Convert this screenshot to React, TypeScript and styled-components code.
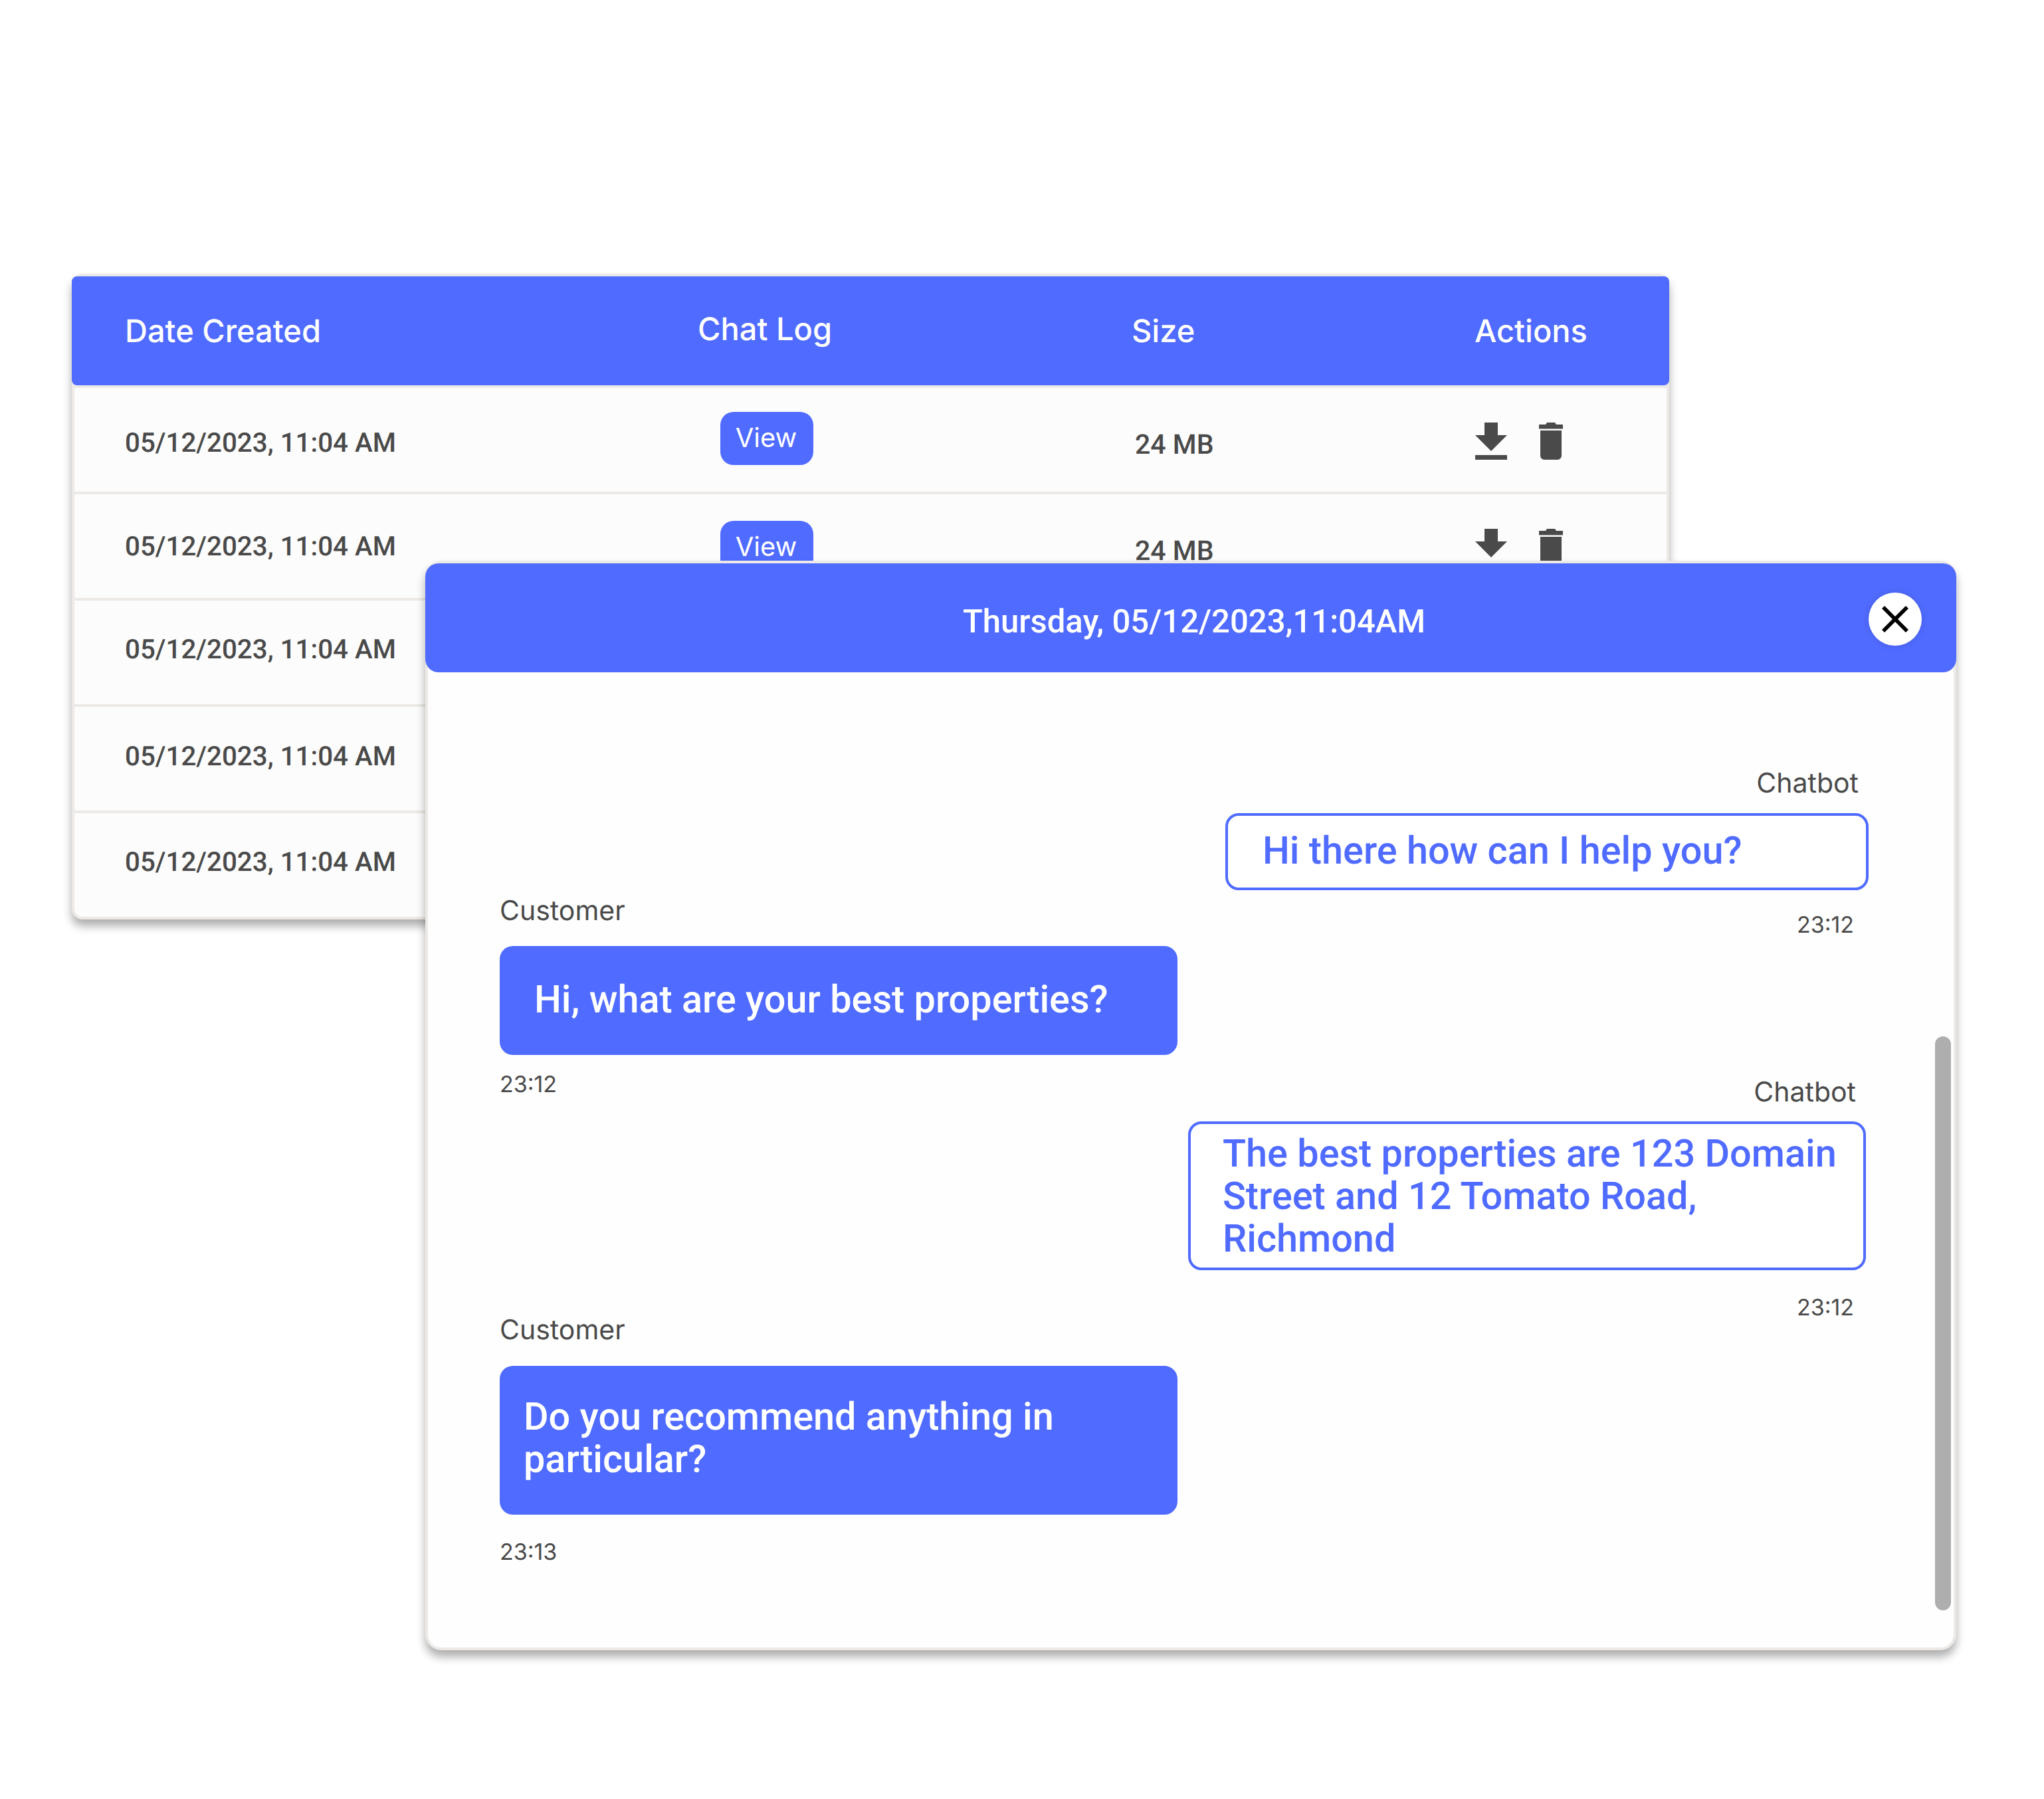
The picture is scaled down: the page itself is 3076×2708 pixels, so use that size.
import React from "react";
import styled, { createGlobalStyle } from "styled-components";

const BLUE = "#506bff";
const INK = "#4a4a4a";
const LINE = "#ece9e6";
const UI_FONT = `Inter, Roboto, "Liberation Sans", sans-serif`;
const CARD_SHADOW = "0 10px 14px rgba(0, 0, 0, 0.32)";

const Global = createGlobalStyle`
  html, body { margin: 0; padding: 0; background: #ffffff; }
  body { font-family: Roboto, "Liberation Sans", sans-serif; color: ${INK}; text-rendering: geometricPrecision; }
`;

const Page = styled.div`
  position: relative;
  width: 3076px;
  height: 2708px;
  padding: 412px 0 0 108px;
  box-sizing: border-box;
  overflow: hidden;
`;

const Table = styled.div`
  width: 2404px;
  box-sizing: border-box;
  border: 4px solid ${LINE};
  border-radius: 16px;
  background: #fcfcfc;
  box-shadow: ${CARD_SHADOW};
`;

const HeadRow = styled.div`
  margin: 0 -4px;
  height: 164px;
  padding: 55px 0 0 80px;
  box-sizing: border-box;
  display: grid;
  grid-template-columns: 862px 653px 516px auto;
  align-items: start;
  background: ${BLUE};
  border-radius: 8px;
`;

const HeadCell = styled.div<{ $lift?: number }>`
  margin-top: ${(p) => -(p.$lift ?? 0)}px;
  font-family: ${UI_FONT};
  font-size: 47px;
  line-height: 56px;
  font-weight: 500;
  color: #fff;
`;

const Row = styled.div`
  height: 160px;
  box-sizing: border-box;
  border-top: 4px solid ${LINE};
  padding-left: 76px;
  display: grid;
  grid-template-columns: 896px 624px 512px auto;
  align-items: start;
  overflow: hidden;
`;

const Cell = styled.div<{ $top: number }>`
  margin-top: ${(p) => p.$top}px;
  font-size: 40.3px;
  line-height: 48px;
  font-weight: 500;
  color: ${INK};
  white-space: nowrap;
`;

const SizeCell = styled(Cell)`
  font-size: 41px;
`;

const ViewButton = styled.button<{ $top: number }>`
  margin-top: ${(p) => p.$top}px;
  width: 140px;
  height: 80px;
  padding: 0 2px 4px 0;
  border: 0;
  border-radius: 20px;
  background: ${BLUE};
  color: #fff;
  font-family: ${UI_FONT};
  font-size: 40px;
  font-weight: 400;
`;

const Actions = styled.div`
  margin-top: 52px;
  display: flex;
  gap: 48px;
`;

const Modal = styled.section`
  position: absolute;
  left: 640px;
  top: 844px;
  width: 2304px;
  height: 1640px;
  box-sizing: border-box;
  border: 4px solid ${LINE};
  border-radius: 24px;
  background: #fefefe;
  box-shadow: ${CARD_SHADOW};
`;

const ModalHeader = styled.header`
  position: relative;
  margin: 0 -4px;
  height: 164px;
  padding: 60px 0 0 10px;
  box-sizing: border-box;
  text-align: center;
  background: ${BLUE};
  border-radius: 20px;
  font-size: 49px;
  line-height: 56px;
  font-weight: 500;
  color: #fff;
`;

const CloseButton = styled.button`
  position: absolute;
  right: 52px;
  top: 44px;
  width: 80px;
  height: 80px;
  padding: 0;
  border: 0;
  border-radius: 50%;
  background: #fff;
  display: flex;
  align-items: center;
  justify-content: center;
  box-shadow: 0 0 12px rgba(0, 0, 0, 0.12);
`;

const Conversation = styled.div`
  padding-left: 108px;
  display: grid;
  grid-template-columns: 1020px 1024px;
  column-gap: 16px;
  align-items: start;
`;

const Side = styled.div<{ $top: number }>`
  padding-top: ${(p) => p.$top}px;
  display: flex;
  flex-direction: column;
`;

const Message = styled.div<{ $top?: number; $right?: boolean }>`
  margin-top: ${(p) => p.$top ?? 0}px;
  display: flex;
  flex-direction: column;
  align-items: ${(p) => (p.$right ? "flex-end" : "flex-start")};
`;

const Sender = styled.div<{ $inset?: number }>`
  margin-right: ${(p) => p.$inset ?? 0}px;
  font-family: ${UI_FONT};
  font-size: 41px;
  line-height: 48px;
  font-weight: 400;
  color: ${INK};
`;

const Bubble = styled.div<{
  $w: number;
  $h: number;
  $pad: number;
  $padEnd?: number;
  $gap: number;
  $inset?: number;
  $drop?: number;
  $raise?: number;
  $outlined?: boolean;
}>`
  width: ${(p) => p.$w}px;
  height: ${(p) => p.$h}px;
  margin-top: ${(p) => p.$gap}px;
  margin-right: ${(p) => p.$inset ?? 0}px;
  padding: ${(p) => p.$drop ?? 0}px ${(p) => p.$padEnd ?? p.$pad}px ${(p) => p.$raise ?? 0}px ${(p) => p.$pad}px;
  box-sizing: border-box;
  display: flex;
  align-items: center;
  border: 4px solid ${BLUE};
  border-radius: 20px;
  background: ${(p) => (p.$outlined ? "#fff" : BLUE)};
  color: ${(p) => (p.$outlined ? BLUE : "#fff")};
  font-size: 57.6px;
  line-height: 64px;
  font-weight: 500;
`;

const Stamp = styled.div<{ $gap: number; $inset?: number }>`
  margin-top: ${(p) => p.$gap}px;
  margin-right: ${(p) => p.$inset ?? 0}px;
  font-family: ${UI_FONT};
  font-size: 34px;
  line-height: 40px;
  font-weight: 400;
  color: ${INK};
`;

const ScrollThumb = styled.div`
  position: absolute;
  right: 4px;
  top: 712px;
  width: 24px;
  height: 864px;
  border-radius: 12px;
  background: #aeaeae;
`;

const DownloadIcon = () => (
  <svg width="48" height="56" viewBox="0 0 48 56" fill={INK}>
    <path d="M14 0h20v19h14L24 43 0 19h14zM0 49h48v7H0z" />
  </svg>
);

const TrashIcon = () => (
  <svg width="36" height="56" viewBox="0 0 36 56" fill={INK}>
    <path d="M0 3h10l2-3h12l2 3h10v6.5H0zM2 12h32v38a6 6 0 0 1-6 6H8a6 6 0 0 1-6-6z" />
  </svg>
);

const CloseIcon = () => (
  <svg width="40" height="40" viewBox="5 5 14 14" fill="#000">
    <path d="M19 6.41 17.59 5 12 10.59 6.41 5 5 6.41 10.59 12 5 17.59 6.41 19 12 13.41 17.59 19 19 17.59 13.41 12z" />
  </svg>
);

const rows = [
  { date: 59, view: 36, size: 62 },
  { date: 55, view: 40, size: 62 },
  { date: 50, view: 40, size: 62 },
  { date: 51, view: 40, size: 62 },
  { date: 50, view: 40, size: 62 },
];

export default function App() {
  return (
    <Page>
      <Global />
      <Table>
        <HeadRow>
          <HeadCell>Date Created</HeadCell>
          <HeadCell $lift={3}>Chat Log</HeadCell>
          <HeadCell>Size</HeadCell>
          <HeadCell>Actions</HeadCell>
        </HeadRow>
        {rows.map((r, i) => (
          <Row key={i}>
            <Cell $top={r.date}>05/12/2023, 11:04 AM</Cell>
            <ViewButton $top={r.view}>View</ViewButton>
            <SizeCell $top={r.size}>24 MB</SizeCell>
            <Actions>
              <DownloadIcon />
              <TrashIcon />
            </Actions>
          </Row>
        ))}
      </Table>

      <Modal>
        <ModalHeader>
          Thursday, 05/12/2023,11:04AM
          <CloseButton aria-label="Close">
            <CloseIcon />
          </CloseButton>
        </ModalHeader>
        <Conversation>
          <Side $top={334}>
            <Message>
              <Sender>Customer</Sender>
              <Bubble $w={1020} $h={164} $pad={48} $gap={30} $raise={1}>Hi, what are your best properties?</Bubble>
              <Stamp $gap={25}>23:12</Stamp>
            </Message>
            <Message $top={324}>
              <Sender>Customer</Sender>
              <Bubble $w={1020} $h={224} $pad={32} $gap={31} $raise={4}>Do you recommend anything in particular?</Bubble>
              <Stamp $gap={37}>23:13</Stamp>
            </Message>
          </Side>
          <Side $top={142}>
            <Message $right>
              <Sender $inset={15}>Chatbot</Sender>
              <Bubble $outlined $w={968} $h={116} $pad={52} $gap={22}>Hi there how can I help you?</Bubble>
              <Stamp $gap={33} $inset={22}>23:12</Stamp>
            </Message>
            <Message $top={206} $right>
              <Sender $inset={19}>Chatbot</Sender>
              <Bubble $outlined $w={1020} $h={224} $inset={4} $pad={48} $padEnd={30} $gap={21} $drop={4}>
                The best properties are 123 Domain Street and 12 Tomato Road, Richmond
              </Bubble>
              <Stamp $gap={37} $inset={22}>23:12</Stamp>
            </Message>
          </Side>
        </Conversation>
        <ScrollThumb />
      </Modal>
    </Page>
  );
}
